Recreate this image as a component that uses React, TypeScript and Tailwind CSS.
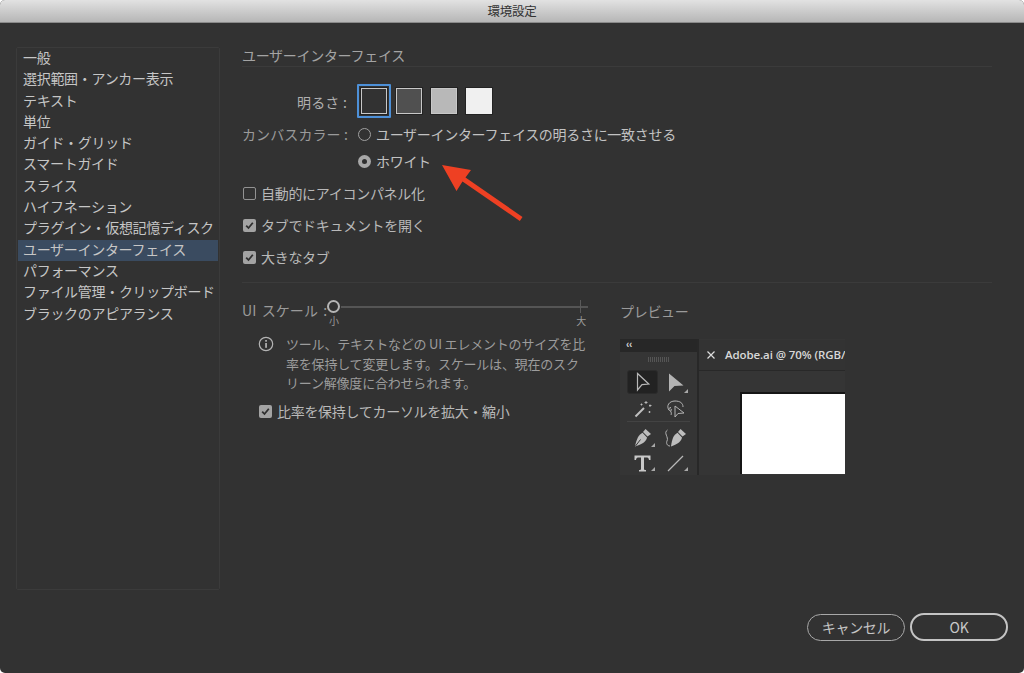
import { FC, ReactNode } from "react";

const jp = "font-['Noto_Sans_CJK_JP','Noto_Sans',sans-serif] tracking-[-0.3px]";

const menuItems = [
  "一般",
  "選択範囲・アンカー表示",
  "テキスト",
  "単位",
  "ガイド・グリッド",
  "スマートガイド",
  "スライス",
  "ハイフネーション",
  "プラグイン・仮想記憶ディスク",
  "ユーザーインターフェイス",
  "パフォーマンス",
  "ファイル管理・クリップボード",
  "ブラックのアピアランス",
];

const Sidebar: FC = () => (
  <div className="w-[204px] h-[543px] border border-[#3b3b3b] rounded-[2px] px-px shrink-0">
    {menuItems.map((item) => (
      <div
        key={item}
        className={`h-[21.3px] leading-[19.3px] pl-[5px] text-[14px] whitespace-nowrap text-[#c6c6c6] ${
          item === "ユーザーインターフェイス" ? "bg-[#3a4b60]" : ""
        }`}
      >
        {item}
      </div>
    ))}
  </div>
);

const Check: FC<{ checked?: boolean }> = ({ checked }) =>
  checked ? (
    <span className="w-[13px] h-[13px] rounded-[2px] bg-[#a3a3a3] flex items-center justify-center shrink-0">
      <svg width="11" height="11" viewBox="0 0 11 11" fill="none">
        <path d="M2.2 5.6 4.5 8 8.8 2.8" stroke="#2f2f2f" strokeWidth="1.8" />
      </svg>
    </span>
  ) : (
    <span className="w-[13px] h-[13px] rounded-[2px] border border-[#929292] shrink-0" />
  );

const CheckRow: FC<{ checked?: boolean; children: ReactNode; className?: string }> = ({
  checked,
  children,
  className,
}) => (
  <div className={`flex items-center gap-[5px] text-[14px] text-[#b9b9b9] whitespace-nowrap ${className ?? ""}`}>
    <Check checked={checked} />
    <span>{children}</span>
  </div>
);

const Swatch: FC<{ color: string; selected?: boolean }> = ({ color, selected }) => (
  <div
    className={`w-[34px] h-[34px] flex items-center justify-center rounded-[1px] ${
      selected ? "border-2 border-[#4d90d8]" : ""
    }`}
  >
    <div className={`w-[26px] h-[26px] border border-[#c8c8c8] ring-1 ring-[#232323] ${color}`} />
  </div>
);

const Radio: FC<{ checked?: boolean }> = ({ checked }) =>
  checked ? (
    <span className="w-[13px] h-[13px] rounded-full bg-[#a8a8a8] flex items-center justify-center shrink-0">
      <span className="w-[5px] h-[5px] rounded-full bg-[#2f2f2f]" />
    </span>
  ) : (
    <span className="w-[13px] h-[13px] rounded-full border border-[#a0a0a0] shrink-0" />
  );

const Corner: FC = () => (
  <span className="absolute right-[3px] bottom-[1px] w-0 h-0 border-l-[4px] border-l-transparent border-b-[4px] border-b-[#a8a8a8]" />
);

const ToolCell: FC<{ children: ReactNode; selected?: boolean; corner?: boolean; className?: string }> = ({
  children,
  selected,
  corner,
  className,
}) => (
  <div
    className={`relative w-[31px] flex items-center justify-center ${
      selected ? "bg-[#222222] rounded-[3px] border border-[#2b2b2b]" : ""
    } ${className ?? ""}`}
  >
    {children}
    {corner && <Corner />}
  </div>
);

const Preview: FC = () => (
  <div className="flex w-[225px] h-[136px] overflow-hidden gap-[2px] bg-[#282828]">
    <div className="w-[77px] bg-[#353535] shrink-0 flex flex-col">
      <div className="h-[13px] bg-[#272727] text-[#cfcfcf] text-[10px] leading-[11px] pl-[6px] font-['Liberation_Sans',sans-serif] font-bold">
        ‹‹
      </div>
      <div className="h-[5px] mx-[28px] mt-[5px] bg-[repeating-linear-gradient(90deg,#555555_0,#555555_1px,transparent_1px,transparent_2px)]" />
      <div className="flex gap-[2px] pl-[7px] mt-[8px]">
        <ToolCell selected className="h-[24px]">
          <svg width="14" height="20" viewBox="0 0 14 20" fill="none">
            <path d="M1.5 1.5V18L6 12.6 12.8 12Z" stroke="#b8b8b8" strokeWidth="1.2" />
          </svg>
        </ToolCell>
        <ToolCell corner className="h-[24px]">
          <svg width="16" height="19" viewBox="0 0 16 19">
            <path d="M1 0.5V18.5L6.500 13 15.500 12.500Z" fill="#b4b4b4" />
          </svg>
        </ToolCell>
      </div>
      <div className="flex gap-[2px] pl-[7px] mt-[5px]">
        <ToolCell className="h-[19px]">
          <svg width="18" height="18" viewBox="0 0 18 18" fill="none" stroke="#c0c0c0">
            <path d="M1.5 16.5 10 8" strokeWidth="2" />
            <path d="M12 1v3M10.5 2.5h3M16 4.5v2.5M15 5.5h2.5M15.500 11v2M14.500 12h2" strokeWidth="0.9" />
            <path d="M7.500 3.500v2M6.500 4.500h2" strokeWidth="0.9" />
          </svg>
        </ToolCell>
        <ToolCell className="h-[19px]">
          <svg width="20" height="18" viewBox="0 0 20 18" fill="none" stroke="#b4b4b4" strokeWidth="1">
            <path d="M3 10C0 6 3 1 9 1c5 0 8 2 8 6" />
            <path d="M9 6v11l3-3.500 6-.500Z" />
            <path d="M5 7.500c-2.500 0-3 3-.800 3.300 1.800.200 1.800-2 .300-1.800M4.500 11c1 1.500 1 3 .500 4" />
          </svg>
        </ToolCell>
      </div>
      <div className="h-px bg-[#434343] mx-[7px] mt-[3px]" />
      <div className="flex gap-[2px] pl-[7px] mt-[6px]">
        <ToolCell corner className="h-[20px]">
          <svg width="18" height="20" viewBox="0 0 18 20">
            <path d="M11.500 1 17 6 13.500 8.500 9 4Z" fill="#bdbdbd" />
            <path d="M8.500 4.800 13 9.500C12.500 13 9 16 1 18.500 2.500 11 4.500 7 8.500 4.800Z" fill="#bdbdbd" />
            <path d="M1.500 18 6.500 11.500" stroke="#353535" strokeWidth="1" />
          </svg>
        </ToolCell>
        <ToolCell className="h-[20px]">
          <svg width="23" height="20" viewBox="0 0 23 20" fill="none">
            <path d="M16.500 1 22 6 18.500 8.500 14 4Z" fill="#bdbdbd" />
            <path d="M13.500 4.800 18 9.500C17.500 13 14 16 7 18.500 8 11 9.500 7 13.500 4.800Z" fill="#bdbdbd" />
            <path d="M3.500 2C-1 5 5 9 3 13c-1 2 0 5 3 5" stroke="#b4b4b4" />
          </svg>
        </ToolCell>
      </div>
      <div className="flex gap-[2px] pl-[7px] mt-[6px]">
        <ToolCell corner className="h-[18px]">
          <svg width="17" height="17" viewBox="0 0 17 17" fill="#c8c8c8">
            <path d="M0.500 0.500H16.500V5H15C14.700 3 14 2.500 12 2.500H10V14C10 14.800 10.500 15 12 15V16.500H5V15C6.500 15 7 14.800 7 14V2.500H5C3 2.500 2.300 3 2 5H0.500Z" />
          </svg>
        </ToolCell>
        <ToolCell corner className="h-[18px]">
          <svg width="17" height="17" viewBox="0 0 17 17" fill="none">
            <path d="M1 16 16 1" stroke="#b8b8b8" strokeWidth="1.200" />
          </svg>
        </ToolCell>
      </div>
    </div>
    <div className="flex-1 min-w-0 flex flex-col bg-[#353535]">
      <div className="h-[31px] mt-px bg-[#333333] border-b border-[#282828] flex items-center whitespace-nowrap text-[11.500px] tracking-[-0.1px] font-semibold text-[#d8d8d8] font-['Open_Sans',sans-serif] shrink-0">
        <svg className="ml-[8px] mr-[10px] shrink-0" width="8" height="8" viewBox="0 0 8 8" stroke="#dddddd" strokeWidth="1.200">
          <path d="M0.500 0.500 7.500 7.500M7.500 0.500 0.500 7.500" />
        </svg>
        Adobe.ai @ 70% (RGB/
      </div>
      <div className="h-[82px] ml-[41px] mt-[21px] bg-white border-l-2 border-t-2 border-[#151515] shrink-0" />
    </div>
  </div>
);

const Info: FC = () => (
  <svg width="16" height="16" viewBox="0 0 16 16" fill="none" className="shrink-0 mt-[1px]">
    <circle cx="8" cy="8" r="6.700" stroke="#b4b4b4" strokeWidth="1.200" />
    <rect x="7.200" y="7" width="1.700" height="4.800" fill="#b4b4b4" />
    <rect x="7.200" y="4" width="1.700" height="1.700" fill="#b4b4b4" />
  </svg>
);

const ScaleSection: FC = () => (
  <div className="w-[346px] shrink-0">
    <div className="flex items-start h-[37px]">
      <span className="w-[84px] pt-[7px] text-[14px] leading-[20px] tracking-[0.1px] [word-spacing:2px] text-[#9a9a9a] whitespace-nowrap">
        UI スケール :
      </span>
      <div className="relative flex-1 pt-[7px]">
        <div className="flex items-center">
          <span className="w-[13px] h-[13px] rounded-full border-2 border-[#b5b5b5] ml-[1px] shrink-0" />
          <div className="w-[247px] h-[2px] bg-[#555555] ml-[1px]" />
        </div>
        <span className="absolute left-[254px] top-[7px] w-px h-[13px] bg-[#5a5a5a]" />
        <div className="flex justify-between w-[260px] mt-[2px] text-[10px] leading-[12px] text-[#9a9a9a] pl-[3px]">
          <span>小</span>
          <span>大</span>
        </div>
      </div>
    </div>
    <div className="flex gap-[12px] pl-[16px] mt-[5px]">
      <Info />
      <p className="text-[13px] tracking-[-0.2px] leading-[19.500px] text-[#9c9c9c] whitespace-nowrap -mt-[1px]">
        ツール、テキストなどの UI エレメントのサイズを比
        <br />
        率を保持して変更します。スケールは、現在のスク
        <br />
        リーン解像度に合わせられます。
      </p>
    </div>
    <CheckRow checked className="pl-[17px] mt-[8px]">
      比率を保持してカーソルを拡大・縮小
    </CheckRow>
  </div>
);

const Arrow: FC = () => (
  <svg className="absolute left-[440px] top-[163px]" width="86" height="60" viewBox="0 0 86 60">
    <path d="M2 2 31 7 25.500 14.500 82.500 54 79.800 58 22.500 18.500 16.500 28Z" fill="#ee4023" />
  </svg>
);

export default function App() {
  return (
    <div className={`relative w-[1024px] h-[673px] bg-white overflow-hidden ${jp}`}>
      <div className="h-full rounded-[5px] bg-[#323232] overflow-hidden flex flex-col">
        <div className="h-[23px] shrink-0 bg-gradient-to-b from-[#e2e2e2] to-[#b6b6b6] border-b border-[#8a8a8a] flex items-center justify-center text-[12.500px] text-[#333333]">
          環境設定
        </div>
        <div className="flex-1 flex pl-[16px] pt-[24px]">
          <Sidebar />
          <div className="ml-[22px] w-[750px]">
            <div className="h-[20px] leading-[16px] text-[14px] text-[#a4a4a4] border-b border-[#3b3b3b]">
              ユーザーインターフェイス
            </div>
            <div className="flex items-center mt-[17px] h-[34px]">
              <span className="w-[105px] pt-[2px] text-right text-[14px] tracking-[0.2px] text-[#b0b0b0] whitespace-nowrap">
                明るさ :
              </span>
              <div className="ml-[10px] -mr-[3px]">
                <Swatch color="bg-[#323232]" selected />
              </div>
              <div className="flex gap-[1px] ml-[4px]">
                <Swatch color="bg-[#505050]" />
                <Swatch color="bg-[#b8b8b8]" />
                <Swatch color="bg-[#f0f0f0] border-[#f0f0f0]" />
              </div>
            </div>
            <div className="flex items-center mt-[6px] h-[20px]">
              <span className="w-[105px] text-right text-[14px] tracking-[0.1px] text-[#9a9a9a] whitespace-nowrap">
                カンバスカラー :
              </span>
              <div className="flex items-center gap-[5px] ml-[11px] text-[14px] text-[#c2c2c2] whitespace-nowrap">
                <Radio />
                ユーザーインターフェイスの明るさに一致させる
              </div>
            </div>
            <div className="flex items-center gap-[5px] ml-[116px] mt-[7px] h-[20px] text-[14px] text-[#c2c2c2]">
              <Radio checked />
              ホワイト
            </div>
            <CheckRow className="ml-[1px] mt-[12px] h-[20px]">自動的にアイコンパネル化</CheckRow>
            <CheckRow checked className="ml-[1px] mt-[12px] h-[20px]">
              タブでドキュメントを開く
            </CheckRow>
            <CheckRow checked className="ml-[1px] mt-[12px] h-[20px]">
              大きなタブ
            </CheckRow>
            <div className="h-px bg-[#3b3b3b] mt-[15px]" />
            <div className="flex mt-[10px]">
              <ScaleSection />
              <div className="ml-[32px]">
                <div className="text-[14px] leading-[20px] text-[#9a9a9a] mt-[8px]">プレビュー</div>
                <div className="mt-[18px]">
                  <Preview />
                </div>
              </div>
            </div>
          </div>
        </div>
        <div className="flex justify-end items-center gap-[5px] pr-[16px] pb-[32px]">
          <button className="w-[98px] h-[27px] rounded-full border border-[#a8a8a8] text-[14px] text-[#c4c4c4]">
            キャンセル
          </button>
          <button className="w-[98px] h-[28px] rounded-full border-2 border-[#c4c4c4] text-[14px] text-[#c8c8c8]">
            OK
          </button>
        </div>
      </div>
      <Arrow />
    </div>
  );
}
